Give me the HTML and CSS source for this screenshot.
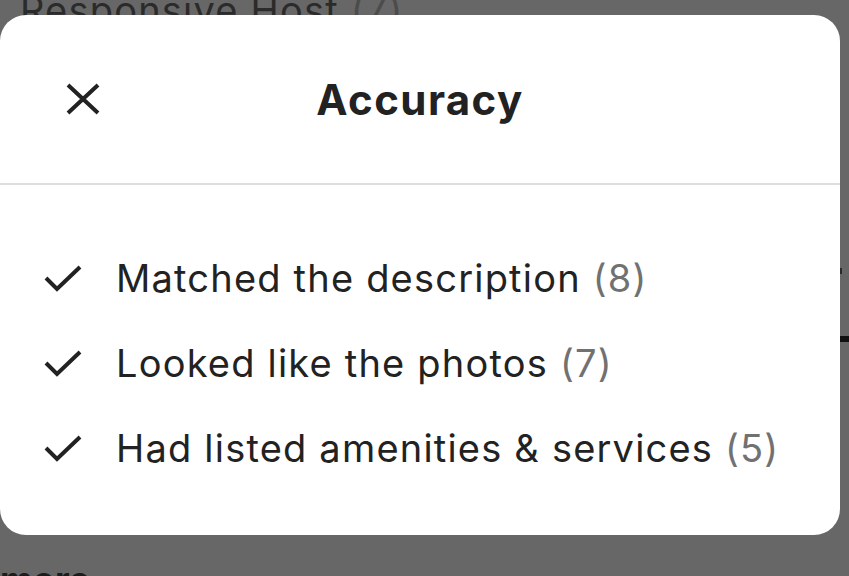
FILE: index.html
```html
<!DOCTYPE html>
<html lang="en">
<head>
    <meta charset="UTF-8">
    <title>Accuracy</title>
    <link rel="stylesheet" href="styles.css">
</head>
<body>
<!--背后的页面-->
<div class="page">
    <div class="page_title">Responsive Host <span class="page_count">(7)</span></div>
    <div class="page_mid">
        <span class="page_tick"></span>
        <span class="page_bar"></span>
    </div>
    <div class="page_more">more</div>
</div>

<!--弹窗-->
<div class="modal">
    <header class="modal_head">
        <button class="modal_close" type="button" aria-label="Close">
            <svg width="34" height="32" viewBox="0 0 34 32">
                <path d="M2 2 L32 30 M32 2 L2 30" stroke="#222" stroke-width="4" fill="none"/>
            </svg>
        </button>
        <h2 class="modal_title">Accuracy</h2>
        <span></span>
    </header>
    <ul class="modal_list">
        <li>
            <svg class="check" width="38" height="28" viewBox="0 0 38 28">
                <path d="M2 14 L13 25 L36 3" stroke="#222" stroke-width="4" fill="none"/>
            </svg>
            <span>Matched the description <em>(8)</em></span>
        </li>
        <li>
            <svg class="check" width="38" height="28" viewBox="0 0 38 28">
                <path d="M2 14 L13 25 L36 3" stroke="#222" stroke-width="4" fill="none"/>
            </svg>
            <span>Looked like the photos <em>(7)</em></span>
        </li>
        <li>
            <svg class="check" width="38" height="28" viewBox="0 0 38 28">
                <path d="M2 14 L13 25 L36 3" stroke="#222" stroke-width="4" fill="none"/>
            </svg>
            <span>Had listed amenities &amp; services <em>(5)</em></span>
        </li>
    </ul>
</div>
</body>
</html>
```

FILE: styles.css
```css
*{
    margin: 0;
    padding: 0;
    box-sizing: border-box;
}
body{
    width: 849px;
    height: 576px;
    overflow: hidden;
    background-color: #676767;
    font-family: "Inter", "Liberation Sans", sans-serif;
    color: #222222;
}
.page{
    height: 576px;
    display: flex;
    flex-direction: column;
}
.page_title{
    margin: -13px 0 0 20px;
    font-size: 38px;
    letter-spacing: 1.2px;
    line-height: 46px;
    color: #2b2b2b;
}
.page_count{
    color: #4c4c4c;
}
.page_mid{
    flex: 1;
    display: flex;
    flex-direction: column;
    align-items: flex-end;
    padding-top: 235px;
}
.page_tick{
    width: 9px;
    height: 6px;
    border-left: 2px solid #2a2a2a;
}
.page_bar{
    margin-top: 62px;
    width: 9px;
    height: 6px;
    background-color: #111111;
}
.page_more{
    margin-bottom: -22px;
    font-size: 36px;
    font-weight: 700;
    line-height: 36px;
    color: #1c1c1c;
}
.modal{
    position: absolute;
    left: 0;
    top: 15px;
    width: 840px;
    height: 520px;
    background-color: #FFFFFF;
    border-radius: 26px;
}
.modal_head{
    height: 170px;
    display: grid;
    grid-template-columns: 1fr auto 1fr;
    align-items: center;
    border-bottom: 2px solid #dddddd;
}
.modal_close{
    justify-self: start;
    margin-left: 66px;
    border: none;
    background: none;
    display: flex;
}
.modal_title{
    font-size: 42px;
    font-weight: 700;
    color: #222222;
    letter-spacing: 1.4px;
}
.modal_list{
    list-style: none;
    padding-top: 50px;
}
.modal_list li{
    height: 85px;
    display: flex;
    align-items: center;
    gap: 34px;
    padding-left: 44px;
    font-size: 38px;
    letter-spacing: 1.2px;
}
.modal_list em{
    font-style: normal;
    color: #717171;
}
```
